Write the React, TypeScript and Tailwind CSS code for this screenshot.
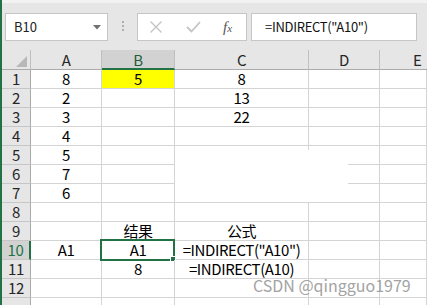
import React from "react";

type Row = { a?: string; b?: string; c?: string; yellow?: boolean; selected?: boolean };

const rows: Row[] = [
  { a: "8", b: "5", c: "8", yellow: true },
  { a: "2", c: "13" },
  { a: "3", c: "22" },
  { a: "4" },
  { a: "5" },
  { a: "7" },
  { a: "6" },
  {},
  { b: "结果", c: "公式" },
  { a: "A1", b: "A1", c: '=INDIRECT("A10")', selected: true },
  { b: "8", c: "=INDIRECT(A10)" },
  {},
  {},
];

const cell = "h-[19px] border-r border-b border-[#d4d4d4] flex justify-center leading-[18px] whitespace-nowrap";

const SheetRow = ({ row, n }: { row: Row; n: number }) => (
  <div className="flex">
    <div
      className={
        row.selected
          ? "w-[29px] h-[19px] bg-[#d2d2d2] border-r-2 border-b border-r-[#217346] border-b-[#c6c6c6] text-[#217346] flex justify-center leading-[18px]"
          : "w-[29px] h-[19px] bg-[#e6e6e6] border-r border-b border-r-[#ababab] border-b-[#c6c6c6] text-[#262626] flex justify-center leading-[18px]"
      }
    >
      {n <= 12 ? n : ""}
    </div>
    <div className={`${cell} w-[71px]`}>{row.a}</div>
    <div className={`${cell} w-[73px] relative ${row.yellow ? "bg-[#ffff00]" : ""}`}>
      {row.b}
      {row.selected && (
        <div className="absolute -left-[2px] -top-[2px] w-[75px] h-[22px] border-2 border-[#217346]">
          <div className="absolute left-[68px] top-[15px] w-[6px] h-[6px] bg-[#217346] border border-white" />
        </div>
      )}
    </div>
    <div className={`${cell} w-[134px]`}>{row.c}</div>
    <div className={`${cell} w-[71px]`} />
    <div className={`${cell} flex-1`} />
  </div>
);

export default function App() {
  return (
    <div className="w-[427px] h-[305px] overflow-hidden bg-white relative border-l-2 border-[#217346] flex flex-col font-['Noto_Sans_CJK_SC',sans-serif] text-[15px] tracking-[-0.4px] text-black">
      {/* formula bar */}
      <div className="h-[50px] shrink-0 bg-[#e6e6e6] border-t-[3px] border-[#f2f2f2] flex items-start pt-[10px] tracking-normal">
        <div className="ml-[3px] w-[103px] h-[28px] bg-white border border-[#c6c6c6] flex items-center justify-between pl-[8px] pr-[6px]">
          <span className="text-[13px] text-[#222]">B10</span>
          <svg width="8" height="5" viewBox="0 0 8 5">
            <polygon points="0,0 8,0 4,4.5" fill="#707070" />
          </svg>
        </div>
        <div className="ml-[14px] mt-[8px] flex flex-col gap-[2px]">
          <div className="w-[2px] h-[2px] bg-[#b0b0b0]" />
          <div className="w-[2px] h-[2px] bg-[#b0b0b0]" />
          <div className="w-[2px] h-[2px] bg-[#b0b0b0]" />
        </div>
        <div className="ml-[13px] w-[110px] h-[28px] bg-white border border-[#c6c6c6] flex items-center pl-[11px]">
          <svg width="14" height="14" viewBox="0 0 14 14">
            <path d="M1.5 1.5 L12.5 12.5 M12.5 1.5 L1.5 12.5" stroke="#c4c4c4" strokeWidth="1.4" />
          </svg>
          <svg className="ml-[23px]" width="15" height="12" viewBox="0 0 15 12">
            <path d="M1 6 L5.5 10.5 L14 1" stroke="#c4c4c4" strokeWidth="1.8" fill="none" />
          </svg>
          <span className="ml-[22px] font-['Liberation_Serif',serif] italic text-[15px] text-[#555] leading-none">
            f<span className="text-[11px]">x</span>
          </span>
        </div>
        <div className="ml-[4px] w-[166px] h-[28px] bg-white border border-[#c6c6c6] flex items-center pl-[13px] text-[13px] tracking-[-0.3px] text-[#111]">
          =INDIRECT("A10")
        </div>
      </div>

      {/* column headers */}
      <div className="flex h-[20px] shrink-0 bg-[#e6e6e6] text-[#262626]">
        <div className="w-[29px] border-r border-b border-r-[#c0c0c0] border-b-[#ababab] flex items-end justify-end pr-[3px] pb-[2px]">
          <svg width="11" height="11" viewBox="0 0 11 11">
            <polygon points="11,0 11,11 0,11" fill="#b8b8b8" />
          </svg>
        </div>
        <div className="w-[71px] border-r border-b border-r-[#c0c0c0] border-b-[#ababab] flex justify-center leading-[19px]">A</div>
        <div className="w-[73px] bg-[#d2d2d2] border-r border-b-2 border-r-[#c0c0c0] border-b-[#217346] text-[#1e5e3b] flex justify-center leading-[19px]">B</div>
        <div className="w-[134px] border-r border-b border-r-[#c0c0c0] border-b-[#ababab] flex justify-center leading-[19px]">C</div>
        <div className="w-[71px] border-r border-b border-r-[#c0c0c0] border-b-[#ababab] flex justify-center leading-[19px]">D</div>
        <div className="flex-1 border-b border-b-[#ababab] pl-[33px] leading-[19px]">E</div>
      </div>

      {rows.map((r, i) => (
        <SheetRow key={i} row={r} n={i + 1} />
      ))}

      {/* blank patch left in the captured picture */}
      <div className="absolute left-[173px] top-[150px] w-[173px] h-[52px] bg-white" />

      <div className="absolute left-[251px] top-[275px] whitespace-nowrap tracking-normal text-[16px] text-[#a3a3a3] leading-[20px]">
        CSDN @qingguo1979
      </div>
    </div>
  );
}
